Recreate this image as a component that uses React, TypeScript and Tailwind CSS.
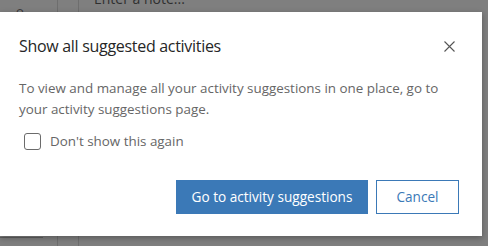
import React from "react";

export default function App() {
  return (
    <div className="relative w-[488px] h-[246px] overflow-hidden bg-[#7f7f7f]" style={{ fontFamily: '"Open Sans", "Noto Sans", sans-serif' }}>
      {/* background page */}
      <div className="flex h-full">
        <div className="w-[58px] border-r border-[#6e6e6e] pl-[16px]">
          <span className="block text-[13px] leading-none text-[#3a3a3a] mt-[5px]">o</span>
        </div>
        <div className="w-[21px] border-r border-[#6e6e6e]" />
        <div className="flex-1 pl-[15px]">
          <div className="text-[14px] leading-none text-[#2f2f2f] mt-[-8px]">Enter a note...</div>
        </div>
      </div>
      <div className="absolute left-0 bottom-[8px] w-[43px] h-[1px] bg-[#5f5f5f]" />

      {/* dialog */}
      <div className="absolute left-0 top-[12px] w-[482px] h-[224px] bg-white shadow-[0_2px_6px_rgba(0,0,0,0.3)] flex flex-col">
        <div className="flex items-start justify-between pl-[19px] pr-[27px] pt-[22px]">
          <h2 className="text-[16px] leading-[24px] tracking-[-0.3px] text-[#262626]">Show all suggested activities</h2>
          <button className="mt-[6px] w-[12px] h-[12px] flex items-center justify-center text-[#555]">
            <svg width="11" height="11" viewBox="0 0 11 11" fill="none" stroke="currentColor" strokeWidth="1.1">
              <path d="M0.5 0.5 L10.5 10.5 M10.5 0.5 L0.5 10.5" />
            </svg>
          </button>
        </div>
        <p className="pl-[19px] pr-[36px] mt-[20px] text-[13.4px] leading-[21px] text-[#666]">
          To view and manage all your activity suggestions in one place, go to your activity suggestions page.
        </p>
        <label className="flex items-center gap-[9px] pl-[24px] mt-[11px]">
          <span className="w-[17px] h-[17px] rounded-[3px] border border-[#6b6b6b] bg-white" />
          <span className="text-[13.4px] leading-[20px] text-[#666]">Don't show this again</span>
        </label>
        <div className="flex justify-end gap-[8px] pr-[23px] mt-[29px]">
          <button className="w-[192px] h-[34px] bg-[#3b79b7] text-white text-[13.6px]">Go to activity suggestions</button>
          <button className="w-[83px] h-[34px] bg-white border-[1.5px] border-[#3b79b7] text-[#3b79b7] text-[13.6px]">Cancel</button>
        </div>
      </div>
    </div>
  );
}
